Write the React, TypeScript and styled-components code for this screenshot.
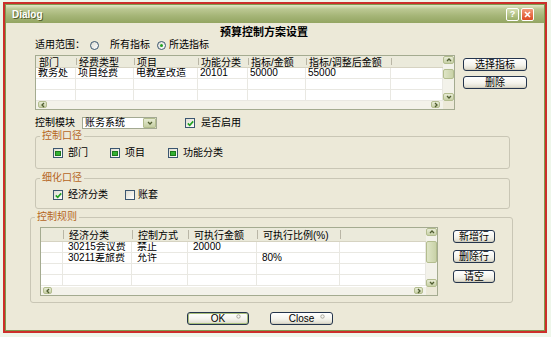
import styled, { createGlobalStyle } from 'styled-components';

const FONT = `"Liberation Sans", "Noto Sans CJK SC", sans-serif`;

const GlobalStyle = createGlobalStyle`
  html, body {
    margin: 0;
    padding: 0;
  }
  body {
    width: 551px;
    height: 337px;
    overflow: hidden;
    background: #eef6ea;
    font-family: ${FONT};
    font-size: 10px;
    color: #000;
  }
`;

type Dir = 'up' | 'down' | 'left' | 'right';

const Chevron = ({ dir }: { dir: Dir }) => {
  const pts = {
    up: '1,4 3,2 5,4',
    down: '1,2 3,4 5,2',
    left: '4,1 2,3 4,5',
    right: '2,1 4,3 2,5',
  }[dir];
  return (
    <svg width="6" height="6" viewBox="0 0 6 6">
      <polyline points={pts} fill="none" stroke="#4f5d30" strokeWidth="1.3" />
    </svg>
  );
};

const CheckMark = () => (
  <svg width="7" height="7" viewBox="0 0 7 7">
    <polyline points="0.8,3.4 2.7,5.3 6.2,1.4" fill="none" stroke="#21a121" strokeWidth="1.6" />
  </svg>
);

const topCols = '40px 58px 64px 50px 58px 85px 1fr';
const topHead = ['部门', '经费类型', '项目', '功能分类', '指标/金额', '指标/调整后金额', ''];
const topRows = [['教务处', '项目经费', '电教室改造', '20101', '50000', '55000', '']];

const ruleCols = '22px 69px 56px 69px 83px 1fr';
const ruleHead = ['', '经济分类', '控制方式', '可执行金额', '可执行比例(%)', ''];
const ruleRows = [
  ['', '30215会议费', '禁止', '20000', '', ''],
  ['', '30211差旅费', '允许', '', '80%', ''],
];

type TableProps = {
  width: number;
  height: number;
  cols: string;
  head: string[];
  rows: string[][];
  rowCount: number;
  headH: number;
  rowH: number;
  pad: number;
  thumbTop: number;
  thumbH: number;
};

const DataTable = (props: TableProps) => {
  const { width, height, cols, head, rows, rowCount, headH, rowH, pad, thumbTop, thumbH } = props;
  const filled = Array.from({ length: rowCount }, (_, i) => rows[i] || head.map(() => ''));

  return (
    <TableBox $w={width} $h={height}>
      <GridArea>
        <HeadRow $cols={cols} $h={headH}>
          {head.map((h, i) => (
            <HeadCell key={i} $sep={i > 0} $pad={pad}>{h}</HeadCell>
          ))}
        </HeadRow>
        {filled.map((r, ri) => (
          <BodyRow key={ri} $cols={cols} $h={rowH}>
            {r.map((c, ci) => (
              <BodyCell key={ci} $pad={pad}>{c}</BodyCell>
            ))}
          </BodyRow>
        ))}
      </GridArea>
      <VScroll>
        <ArrowBtn $w={11} $h={8}><Chevron dir="up" /></ArrowBtn>
        <Thumb style={{ marginTop: thumbTop - 8, height: thumbH }} />
        <Track />
        <ArrowBtn $w={11} $h={8}><Chevron dir="down" /></ArrowBtn>
      </VScroll>
      <HScroll>
        <ArrowBtn $w={9} $h={7}><Chevron dir="left" /></ArrowBtn>
        <Track />
        <ArrowBtn $w={9} $h={7}><Chevron dir="right" /></ArrowBtn>
      </HScroll>
      <Corner />
    </TableBox>
  );
};

const Check = ({ state }: { state: 'on' | 'off' | 'mixed' }) => (
  <Box>
    {state === 'on' && <CheckMark />}
    {state === 'mixed' && <MixedFill />}
  </Box>
);

const PushButton = ({ w, label, isDefault, pin }: { w: number; label: string; isDefault?: boolean; pin?: boolean }) => (
  <Button $w={w} $default={isDefault}>
    {label}
    {pin && (
      <Pin>
        <svg width="5" height="5" viewBox="0 0 5 5">
          <circle cx="2.5" cy="2.5" r="1.7" fill="none" stroke="#a19f93" strokeWidth="0.9" />
        </svg>
      </Pin>
    )}
  </Button>
);

export default function App() {
  return (
    <>
      <GlobalStyle />
      <Window>
        <Frame>
          <TitleBar>
            <TitleText>Dialog</TitleText>
            <TitleButton $kind="help">?</TitleButton>
            <TitleButton $kind="close">
              <svg width="7" height="7" viewBox="0 0 7 7">
                <path d="M1 1L6 6M6 1L1 6" stroke="#fff" strokeWidth="1.6" />
              </svg>
            </TitleButton>
          </TitleBar>

          <Body>
            <Heading>预算控制方案设置</Heading>

            <Line $top={0} $left={29} $h={12}>
              <Label>适用范围：</Label>
              <Option $ml={5} $gap={11}>
                <Radio />
                <Label>所有指标</Label>
              </Option>
              <Option $ml={7} $gap={3}>
                <Radio $on><RadioDot /></Radio>
                <Label>所选指标</Label>
              </Option>
            </Line>

            <Section $top={4} $left={29}>
              <DataTable
                width={420}
                height={55}
                cols={topCols}
                head={topHead}
                rows={topRows}
                rowCount={3}
                headH={12}
                rowH={11}
                pad={2}
                thumbTop={13}
                thumbH={10}
              />
              <ButtonColumn $ml={8} $top={3} $gap={5}>
                <PushButton w={64} label="选择指标" />
                <PushButton w={64} label="删除" />
              </ButtonColumn>
            </Section>

            <Line $top={7} $left={29} $h={12}>
              <Label>控制模块</Label>
              <Combo>
                <ComboText>账务系统</ComboText>
                <ComboButton><Chevron dir="down" /></ComboButton>
              </Combo>
              <Option $ml={28} $gap={6}>
                <Check state="on" />
                <Label>是否启用</Label>
              </Option>
            </Line>

            <Group $top={1} $left={29} $w={475} $h={39}>
              <Caption>控制口径</Caption>
              <Line $top={5} $left={17} $h={12}>
                <Option $ml={0} $gap={5}>
                  <Check state="mixed" />
                  <Label>部门</Label>
                </Option>
                <Option $ml={22} $gap={5}>
                  <Check state="mixed" />
                  <Label>项目</Label>
                </Option>
                <Option $ml={23} $gap={5}>
                  <Check state="mixed" />
                  <Label>功能分类</Label>
                </Option>
              </Line>
            </Group>

            <Group $top={3} $left={29} $w={475} $h={37}>
              <Caption>细化口径</Caption>
              <Line $top={5} $left={17} $h={12}>
                <Option $ml={0} $gap={5}>
                  <Check state="on" />
                  <Label>经济分类</Label>
                </Option>
                <Option $ml={17} $gap={3}>
                  <Check state="off" />
                  <Label>账套</Label>
                </Option>
              </Line>
            </Group>

            <Group $top={2} $left={24} $w={483} $h={92}>
              <Caption>控制规则</Caption>
              <Section $top={4} $left={9}>
                <DataTable
                  width={398}
                  height={69}
                  cols={ruleCols}
                  head={ruleHead}
                  rows={ruleRows}
                  rowCount={4}
                  headH={14}
                  rowH={11}
                  pad={5}
                  thumbTop={13}
                  thumbH={22}
                />
                <ButtonColumn $ml={15} $top={3} $gap={7}>
                  <PushButton w={42} label="新增行" />
                  <PushButton w={42} label="删除行" />
                  <PushButton w={42} label="请空" />
                </ButtonColumn>
              </Section>
            </Group>

            <Line $top={9} $left={181} $h={13}>
              <PushButton w={62} label="OK" isDefault pin />
              <Spacer $w={21} />
              <PushButton w={63} label="Close" pin />
            </Line>
          </Body>
        </Frame>
      </Window>
    </>
  );
}

const Window = styled.div`
  margin: 2px 0 0 3px;
  width: 544px;
  height: 331px;
  box-sizing: border-box;
  border: 2px solid #cc2f2a;
  display: flex;
`;

const Frame = styled.div`
  flex: 1;
  min-width: 0;
  border: 1px solid #7f9a4e;
  display: flex;
  flex-direction: column;
`;

const TitleBar = styled.div`
  flex: none;
  height: 18px;
  display: flex;
  align-items: center;
  padding: 0 10px 0 6px;
  background: linear-gradient(#e2e8c8 0%, #bcc893 22%, #a5b577 60%, #93a562 100%);
`;

const TitleText = styled.span`
  flex: 1;
  font-family: "Liberation Sans", sans-serif;
  font-weight: bold;
  font-size: 10px;
  color: #fff;
  text-shadow: 1px 1px 0 #55622f;
`;

const TitleButton = styled.div<{ $kind: 'help' | 'close' }>`
  width: 13px;
  height: 13px;
  margin-left: 2px;
  box-sizing: border-box;
  border: 1px solid #fff;
  border-radius: 2px;
  display: flex;
  align-items: center;
  justify-content: center;
  color: #fff;
  font-weight: bold;
  font-size: 9px;
  line-height: 1;
  background: ${p =>
    p.$kind === 'close'
      ? 'linear-gradient(#f39a78, #dc4a22)'
      : 'linear-gradient(#d4ddae, #9aae68)'};
`;

const Body = styled.div`
  flex: 1;
  background: #ece9d8;
  display: flex;
  flex-direction: column;
  align-items: flex-start;
`;

const Heading = styled.div`
  margin: 2px 0 0 214px;
  height: 14px;
  line-height: 14px;
  font-size: 11px;
  font-weight: bold;
`;

const Line = styled.div<{ $top: number; $left: number; $h: number }>`
  display: flex;
  align-items: center;
  height: ${p => p.$h}px;
  margin: ${p => p.$top}px 0 0 ${p => p.$left}px;
  white-space: nowrap;
`;

const Section = styled.div<{ $top: number; $left: number }>`
  display: flex;
  align-items: flex-start;
  margin: ${p => p.$top}px 0 0 ${p => p.$left}px;
`;

const Label = styled.span`
  line-height: 12px;
  white-space: nowrap;
`;

const Option = styled.span<{ $ml: number; $gap: number }>`
  display: inline-flex;
  align-items: center;
  gap: ${p => p.$gap}px;
  margin-left: ${p => p.$ml}px;
`;

const Spacer = styled.span<{ $w: number }>`
  width: ${p => p.$w}px;
  flex: none;
`;

const Radio = styled.span<{ $on?: boolean }>`
  width: 9px;
  height: 9px;
  box-sizing: border-box;
  border: 1px solid #3b5670;
  border-radius: 50%;
  background: linear-gradient(135deg, #dcdcd2, #ffffff);
  display: inline-flex;
  align-items: center;
  justify-content: center;
  flex: none;
`;

const RadioDot = styled.span`
  width: 3px;
  height: 3px;
  border-radius: 50%;
  background: #21a121;
`;

const Box = styled.span`
  width: 10px;
  height: 10px;
  box-sizing: border-box;
  border: 1px solid #3b5670;
  background: linear-gradient(135deg, #dedcd0, #ffffff);
  display: inline-flex;
  align-items: center;
  justify-content: center;
  flex: none;
`;

const MixedFill = styled.span`
  width: 6px;
  height: 5px;
  box-sizing: border-box;
  border: 1px solid #1c7a1c;
  background: #33b133;
`;

const Combo = styled.div`
  margin-left: 7px;
  width: 75px;
  height: 12px;
  box-sizing: border-box;
  border: 1px solid #a3a992;
  background: #fff;
  display: flex;
  align-items: stretch;
`;

const ComboText = styled.span`
  flex: 1;
  padding-left: 2px;
  line-height: 10px;
`;

const ComboButton = styled.span`
  width: 13px;
  box-sizing: border-box;
  border: 1px solid #b3bd8e;
  border-radius: 1px;
  background: linear-gradient(#e6ebd2, #c5cea3);
  display: flex;
  align-items: center;
  justify-content: center;
`;

const Group = styled.fieldset<{ $top: number; $left: number; $w: number; $h: number }>`
  margin: ${p => p.$top}px 0 0 ${p => p.$left}px;
  width: ${p => p.$w}px;
  height: ${p => p.$h}px;
  min-width: 0;
  box-sizing: border-box;
  padding: 0;
  border: 1px solid #c9c6b5;
  border-radius: 3px;
  display: flex;
  flex-direction: column;
  align-items: flex-start;
`;

const Caption = styled.legend`
  margin-left: 4px;
  padding: 0 2px;
  line-height: 12px;
  font-size: 10px;
  color: #b5651d;
`;

const ButtonColumn = styled.div<{ $ml: number; $top: number; $gap: number }>`
  display: flex;
  flex-direction: column;
  gap: ${p => p.$gap}px;
  margin: ${p => p.$top}px 0 0 ${p => p.$ml}px;
`;

const Button = styled.button<{ $w: number; $default?: boolean }>`
  position: relative;
  width: ${p => p.$w}px;
  height: 13px;
  padding: 0;
  box-sizing: border-box;
  border: 1px solid #24344c;
  border-radius: 3px;
  background: linear-gradient(#ffffff, #f4f3ec 55%, #dcd9ca);
  box-shadow: ${p => (p.$default ? 'inset 0 0 0 1px #a8bf7c' : 'inset 0 -1px 0 #d2cfbf')};
  font-family: ${FONT};
  font-size: 10px;
  line-height: 11px;
  color: #000;
  white-space: nowrap;
`;

const Pin = styled.span`
  position: absolute;
  top: 1px;
  right: 7px;
  display: flex;
`;

const TableBox = styled.div<{ $w: number; $h: number }>`
  width: ${p => p.$w}px;
  height: ${p => p.$h}px;
  box-sizing: border-box;
  border: 1px solid #a4ab90;
  background: #fff;
  display: grid;
  grid-template-columns: 1fr 11px;
  grid-template-rows: 1fr 8px;
  flex: none;
`;

const GridArea = styled.div`
  display: flex;
  flex-direction: column;
  overflow: hidden;
  min-width: 0;
`;

const HeadRow = styled.div<{ $cols: string; $h: number }>`
  display: grid;
  grid-template-columns: ${p => p.$cols};
  height: ${p => p.$h}px;
  flex: none;
  background: #ebeadb;
  border-bottom: 1px solid #d6d3c2;
  box-sizing: border-box;
`;

const HeadCell = styled.div<{ $sep: boolean; $pad: number }>`
  position: relative;
  padding-left: ${p => p.$pad + 1}px;
  display: flex;
  align-items: center;
  white-space: nowrap;
  overflow: hidden;
  &::before {
    content: '';
    display: ${p => (p.$sep ? 'block' : 'none')};
    position: absolute;
    left: 0;
    top: 2px;
    bottom: 2px;
    width: 1px;
    background: #b9b6a6;
  }
`;

const BodyRow = styled.div<{ $cols: string; $h: number }>`
  display: grid;
  grid-template-columns: ${p => p.$cols};
  height: ${p => p.$h}px;
  flex: none;
`;

const BodyCell = styled.div<{ $pad: number }>`
  padding-left: ${p => p.$pad}px;
  border-right: 1px solid #e9e8e2;
  border-bottom: 1px solid #e9e8e2;
  line-height: 10px;
  white-space: nowrap;
  overflow: hidden;
`;

const VScroll = styled.div`
  display: flex;
  flex-direction: column;
  align-items: stretch;
  background: #f3f2ea;
`;

const HScroll = styled.div`
  display: flex;
  align-items: stretch;
  padding: 0 3px 0 2px;
  background: #f3f2ea;
`;

const Corner = styled.div`
  background: #ece9d8;
`;

const ArrowBtn = styled.span<{ $w: number; $h: number }>`
  flex: none;
  width: ${p => p.$w}px;
  height: ${p => p.$h}px;
  box-sizing: border-box;
  border: 1px solid #b3bd8e;
  border-radius: 2px;
  background: linear-gradient(#e8ecd6, #c7d0a6);
  display: flex;
  align-items: center;
  justify-content: center;
`;

const Thumb = styled.span`
  flex: none;
  box-sizing: border-box;
  border: 1px solid #b3bd8e;
  border-radius: 2px;
  background: linear-gradient(90deg, #dfe5c6, #c9d2a8);
`;

const Track = styled.span`
  flex: 1;
`;
